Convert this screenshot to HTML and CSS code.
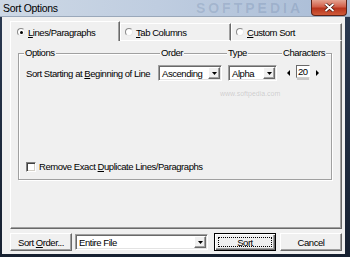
FILE: index.html
```html
<!DOCTYPE html>
<html lang="en">
<head>
    <meta charset="UTF-8">
    <title>Sort Options</title>
    <link rel="stylesheet" href="styles.css">
</head>
<body>
    <div class="window">
        <div class="titlebar">
            <span class="title">Sort Options</span>
            <span class="brand">SOFTPEDIA</span>
            <span class="close">
                <svg width="11" height="9" viewBox="0 0 11 9"><path d="M1.5 1L9.5 8M9.5 1L1.5 8" stroke="#3a1008" stroke-width="3.2"/><path d="M1.5 1L9.5 8M9.5 1L1.5 8" stroke="#fff" stroke-width="1.8"/></svg>
            </span>
        </div>
        <div class="frame">
            <div class="client">
                <div class="tabs">
                    <div class="tab tab-active"><span class="radio radio-on"></span><span><u>L</u>ines/Paragraphs</span></div>
                    <div class="tab"><span class="radio"></span><span><u>T</u>ab Columns</span></div>
                    <div class="tab"><span class="radio"></span><span><u>C</u>ustom Sort</span></div>
                </div>
                <div class="panel">
                    <div class="group">
                        <div class="group-head">
                            <span class="cap cap-options">Options</span>
                            <span class="cap cap-order">Order</span>
                            <span class="cap cap-type">Type</span>
                            <span class="cap cap-chars">Characters</span>
                        </div>
                        <div class="group-row">
                            <span class="row-label">Sort Starting at <u>B</u>eginning of Line</span>
                            <div class="combo combo-order">
                                <span class="combo-text">Ascending</span>
                                <span class="drop"><svg width="5" height="3" viewBox="0 0 5 3"><path d="M0 0H5L2.5 3Z" fill="#000"/></svg></span>
                            </div>
                            <div class="combo combo-type">
                                <span class="combo-text">Alpha</span>
                                <span class="drop"><svg width="5" height="3" viewBox="0 0 5 3"><path d="M0 0H5L2.5 3Z" fill="#000"/></svg></span>
                            </div>
                            <div class="spin">
                                <span class="spin-arrow"><svg width="3" height="6" viewBox="0 0 3 6"><path d="M3 0V6L0 3Z" fill="#000"/></svg></span>
                                <span class="spin-box">20</span>
                                <span class="spin-arrow"><svg width="3" height="6" viewBox="0 0 3 6"><path d="M0 0V6L3 3Z" fill="#000"/></svg></span>
                            </div>
                        </div>
                        <div class="check"><span class="box"></span><span>Remove Exact <u>D</u>uplicate Lines/Paragraphs</span></div>
                        <span class="mark">www.softpedia.com</span>
                    </div>
                </div>
                <div class="actions">
                    <button class="btn"><span>Sort <u>O</u>rder...</span></button>
                    <div class="combo combo-range">
                        <span class="combo-text">Entire File</span>
                        <span class="drop"><svg width="5" height="3" viewBox="0 0 5 3"><path d="M0 0H5L2.5 3Z" fill="#000"/></svg></span>
                    </div>
                    <button class="btn btn-default"><span class="focus">Sort</span></button>
                    <button class="btn"><span>Cancel</span></button>
                </div>
            </div>
        </div>
    </div>
</body>
</html>
```

FILE: styles.css
```css
body {
    margin: 0;
    font-family: "Liberation Sans", Arial, sans-serif;
    font-size: 9.5px;
    letter-spacing: -0.45px;
    color: #000;
    background: #1b2433;
}
u {
    text-decoration: underline;
    text-underline-offset: 1px;
}
.window {
    width: 350px;
    height: 257px;
    display: flex;
    flex-direction: column;
    overflow: hidden;
    background: linear-gradient(#2b3a52, #162030);
}
.titlebar {
    height: 17px;
    flex: none;
    display: flex;
    align-items: flex-start;
    background: linear-gradient(90deg, #cdd8e5 0%, #bfcde0 45%, #a9bcd6 100%);
    border-bottom: 1px solid #9aa8ba;
    box-sizing: border-box;
}
.title {
    font-size: 10.5px;
    letter-spacing: -0.3px;
    line-height: 16px;
    padding-left: 3px;
}
.brand {
    margin-left: auto;
    margin-right: 8px;
    font-weight: bold;
    font-size: 14px;
    line-height: 16px;
    letter-spacing: 3px;
    color: rgba(50, 80, 125, 0.16);
}
.close {
    width: 34px;
    height: 15px;
    margin-right: 3px;
    display: flex;
    align-items: center;
    justify-content: center;
    border: 1px solid #5a2218;
    border-top: none;
    border-radius: 0 0 4px 4px;
    background: linear-gradient(#e4a391 0%, #d2604a 45%, #b8341c 55%, #cf5a3a 100%);
}
.frame {
    flex: 1;
    display: flex;
    padding: 0 5px 3px 2px;
}
.client {
    flex: 1;
    display: flex;
    flex-direction: column;
    background: #f0f0f0;
    padding: 4px 3px 3px 8px;
}
.tabs {
    height: 20px;
    display: flex;
    align-items: flex-end;
    flex: none;
}
.tab {
    height: 18px;
    box-sizing: border-box;
    display: flex;
    align-items: center;
    gap: 3px;
    padding-left: 4px;
    background: #f0f0f0;
    border-top: 1px solid #fff;
    border-left: 1px solid #fff;
    border-right: 1px solid #696969;
    border-bottom: 1px solid #fff;
    box-shadow: inset -1px 0 0 #a0a0a0;
    width: 111px;
}
.tab-active {
    width: 110px;
    height: 20px;
    border-bottom: none;
    padding-left: 6px;
    padding-top: 1px;
}
.radio {
    width: 8px;
    height: 8px;
    box-sizing: border-box;
    border-radius: 50%;
    background: #fff;
    border: 1px solid;
    border-color: #8a8a8a #e8e8e8 #e8e8e8 #8a8a8a;
    display: flex;
    align-items: center;
    justify-content: center;
}
.radio-on::after {
    content: "";
    width: 3px;
    height: 3px;
    border-radius: 50%;
    background: #000;
}
.panel {
    flex: 1;
    display: flex;
    flex-direction: column;
    border-left: 1px solid #fff;
    border-right: 1px solid #696969;
    border-bottom: 1px solid #696969;
    box-shadow: inset -1px -1px 0 #a0a0a0;
    padding: 12px 9px 0 7px;
}
.group {
    height: 127px;
    box-sizing: border-box;
    display: flex;
    flex-direction: column;
    position: relative;
    border: 1px solid #a0a0a0;
    box-shadow: inset 1px 1px 0 #fff, 1px 1px 0 #fff;
    padding-left: 7px;
}
.group-head,
.group-row {
    display: grid;
    grid-template-columns: 132px 70px 57px auto;
    align-items: center;
}
.group-head {
    margin-top: -7px;
    line-height: 11px;
}
.cap {
    justify-self: start;
    background: #f0f0f0;
    padding: 0 1px;
}
.cap-options { margin-left: -2px; }
.cap-order { margin-left: 2px; }
.cap-type { margin-left: -1px; }
.cap-chars { margin-left: -3px; }
.group-row {
    margin-top: 7px;
    height: 16px;
}
.combo {
    height: 16px;
    box-sizing: border-box;
    display: flex;
    align-items: center;
    background: #fff;
    border: 1px solid;
    border-color: #a0a0a0 #fff #fff #a0a0a0;
    box-shadow: inset 1px 1px 0 #696969, inset -1px -1px 0 #e3e3e3;
    padding: 1px 1px 1px 2px;
}
.combo-order { width: 64px; }
.combo-type { width: 49px; }
.combo-text {
    flex: 1;
    padding-left: 1px;
    white-space: nowrap;
    overflow: hidden;
}
.drop {
    width: 12px;
    height: 12px;
    box-sizing: border-box;
    display: flex;
    align-items: center;
    justify-content: center;
    background: #f0f0f0;
    border: 1px solid;
    border-color: #fff #696969 #696969 #fff;
    box-shadow: inset -1px -1px 0 #a0a0a0;
}
.spin {
    display: flex;
    align-items: center;
    height: 16px;
    width: 40px;
    gap: 4px;
}
.spin-arrow {
    width: 7px;
    display: flex;
    justify-content: center;
}
.spin-box {
    width: 14px;
    height: 13px;
    box-sizing: border-box;
    background: #fff;
    border: 1px solid;
    border-color: #696969 #fff #d0d0d0 #696969;
    line-height: 11px;
    padding-left: 1px;
    margin-top: -3px;
    box-shadow: 0 3px 0 -1px #c8c8c8;
}
.check {
    margin-top: auto;
    margin-bottom: 7px;
    display: flex;
    align-items: center;
    gap: 3px;
    line-height: 11px;
}
.box {
    width: 10px;
    height: 10px;
    box-sizing: border-box;
    background: #fff;
    border: 1px solid;
    border-color: #808080 #fff #fff #808080;
    box-shadow: inset 1px 1px 0 #404040, inset -1px -1px 0 #d4d0c8;
}
.mark {
    position: absolute;
    left: 201px;
    top: 36px;
    font-size: 7px;
    letter-spacing: 0;
    color: rgba(120, 120, 120, 0.3);
}
.actions {
    flex: none;
    display: flex;
    align-items: center;
    height: 18px;
    margin-top: 4px;
}
.btn {
    width: 62px;
    height: 18px;
    padding: 0;
    font: inherit;
    letter-spacing: inherit;
    color: #000;
    background: #f0f0f0;
    border: 1px solid;
    border-color: #fff #696969 #696969 #fff;
    box-shadow: inset -1px -1px 0 #a0a0a0;
    display: flex;
    align-items: center;
    justify-content: center;
}
.combo-range {
    width: 133px;
    height: 16px;
    margin-left: 3px;
}
.btn-default {
    margin-left: 6px;
    border: 1px solid #000;
    box-shadow: inset 1px 1px 0 #fff, inset -1px -1px 0 #696969, inset -2px -2px 0 #a0a0a0;
    padding: 3px;
}
.focus {
    flex: 1;
    align-self: stretch;
    display: flex;
    align-items: center;
    justify-content: center;
    border: 1px dotted #000;
}
.btn-default + .btn {
    margin-left: 4px;
}
```
